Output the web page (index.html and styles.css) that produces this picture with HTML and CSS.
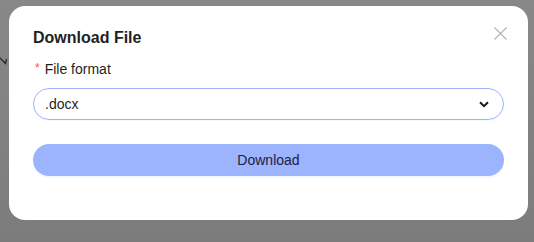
FILE: index.html
```html
<!DOCTYPE html>
<html>
<head>
<meta charset="utf-8">
<link rel="stylesheet" href="styles.css">
</head>
<body>
<div class="backdrop">
  <svg class="bg-mark" width="10" height="14" viewBox="0 0 10 14"><path d="M0 2 L5 7 L6.5 8.5 L7.5 4" fill="none" stroke="#222" stroke-width="1.2"/></svg>
  <div class="modal">
    <button class="close" aria-label="Close">
      <svg width="13" height="13" viewBox="0 0 13 13"><path d="M0.5 0.5 L12.5 12.5 M12.5 0.5 L0.5 12.5" stroke="#b3b3b3" stroke-width="1.2" fill="none"/></svg>
    </button>
    <h2 class="title">Download File</h2>
    <div class="label"><span class="req">*</span>File format</div>
    <div class="select">
      <span class="value">.docx</span>
      <svg class="chev" width="10" height="7" viewBox="0 0 10 7"><path d="M1 1.2 L5 5.2 L9 1.2" fill="none" stroke="#1a1a1a" stroke-width="2"/></svg>
    </div>
    <button class="download">Download</button>
  </div>
</div>
</body>
</html>
```
FILE: styles.css
```css
html, body {
  margin: 0;
  padding: 0;
}
body {
  width: 534px;
  height: 242px;
  overflow: hidden;
  font-family: "Liberation Sans", Arial, sans-serif;
}
.backdrop {
  position: relative;
  width: 534px;
  height: 242px;
  background: linear-gradient(#888888, #7c7c7c);
  padding: 6px 6px 0 9px;
  box-sizing: border-box;
}
.bg-mark {
  position: absolute;
  left: -1px;
  top: 55px;
}
.modal {
  position: relative;
  width: 519px;
  height: 214px;
  box-sizing: border-box;
  background: #fff;
  border-radius: 16px;
  padding: 20px 24px 44px 24px;
  display: flex;
  flex-direction: column;
}
.close {
  position: absolute;
  top: 21px;
  right: 21px;
  width: 13px;
  height: 13px;
  padding: 0;
  border: 0;
  background: none;
  display: flex;
}
.title {
  margin: 0;
  font-size: 16px;
  line-height: 24px;
  font-weight: bold;
  color: #1f1f1f;
}
.label {
  margin-top: 8px;
  font-size: 14px;
  line-height: 22px;
  color: #1f1f1f;
  display: flex;
  align-items: center;
}
.req {
  color: #ff4d4f;
  font-size: 12px;
  margin-left: 2px;
  margin-right: 5px;
  position: relative;
  top: -1px;
}
.select {
  margin-top: 8px;
  height: 32px;
  box-sizing: border-box;
  border: 1px solid #9fb3fb;
  border-radius: 16px;
  padding: 0 14px 0 11px;
  display: flex;
  align-items: center;
  justify-content: space-between;
  box-shadow: 0 1px 0 rgba(5, 145, 255, 0.05);
}
.value {
  font-size: 14px;
  color: #1f1f1f;
}
.chev {
  display: block;
}
.download {
  margin-top: 24px;
  height: 32px;
  border: 0;
  border-radius: 16px;
  background: #9cb3fd;
  color: #1d2140;
  font-family: "Liberation Sans", Arial, sans-serif;
  font-size: 14px;
  padding: 0;
  box-shadow: 0 2px 0 rgba(5, 145, 255, 0.06);
}
```
